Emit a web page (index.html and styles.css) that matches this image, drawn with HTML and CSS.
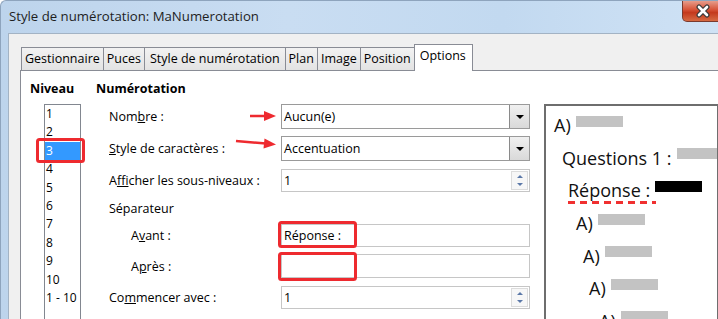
FILE: index.html
```html
<!DOCTYPE html>
<html lang="fr">
<head>
<meta charset="utf-8">
<link rel="stylesheet" href="styles.css">
</head>
<body>
<div class="window">
  <div class="titlebar">
    <span class="title">Style de numérotation: MaNumerotation</span>
    <div class="close">
      <svg width="20" height="14" viewBox="0 0 20 14"><path d="M6 3 L14 11 M14 3 L6 11" stroke="#3a3a3a" stroke-width="5" stroke-linecap="round"/><path d="M6 3 L14 11 M14 3 L6 11" stroke="#fff" stroke-width="2.6" stroke-linecap="round"/></svg>
    </div>
  </div>
  <div class="client">
    <div class="tabs">
      <div class="tab">Gestionnaire</div>
      <div class="tab">Puces</div>
      <div class="tab wide">Style de numérotation</div>
      <div class="tab">Plan</div>
      <div class="tab">Image</div>
      <div class="tab">Position</div>
      <div class="tab active">Options</div>
    </div>
    <div class="panel">
      <div class="col-level">
        <div class="hdr">Niveau</div>
        <div class="listbox">
          <div class="item">1</div>
          <div class="item">2</div>
          <div class="item sel">3</div>
          <div class="item">4</div>
          <div class="item">5</div>
          <div class="item">6</div>
          <div class="item">7</div>
          <div class="item">8</div>
          <div class="item">9</div>
          <div class="item">10</div>
          <div class="item">1 - 10</div>
        </div>
      </div>
      <div class="col-num">
        <div class="hdr">Numérotation</div>
        <div class="form">
          <div class="row r1"><span class="lbl">Nom<u>b</u>re :</span><div class="combo"><span class="val">Aucun(e)</span><span class="drop"><i></i></span></div></div>
          <div class="row r2"><span class="lbl"><u>S</u>tyle de caractères :</span><div class="combo"><span class="val">Accentuation</span><span class="drop"><i></i></span></div></div>
          <div class="row r3"><span class="lbl">A<u>f</u>ficher les sous-niveaux :</span><div class="field"><span class="val">1</span><span class="spin"><i class="up"></i><i class="dn"></i></span></div></div>
          <div class="row r4"><span class="lbl">Séparateur</span></div>
          <div class="row r5"><span class="lbl ind">A<u>v</u>ant :</span><div class="field"><span class="val">Réponse :</span></div></div>
          <div class="row r6"><span class="lbl ind">A<u>p</u>rès :</span><div class="field"><span class="val"></span></div></div>
          <div class="row r7"><span class="lbl">Co<u>m</u>mencer avec :</span><div class="field"><span class="val">1</span><span class="spin"><i class="up"></i><i class="dn"></i></span></div></div>
        </div>
      </div>
      <div class="preview">
        <div class="pl p1"><span>A)</span><b class="bar"></b></div>
        <div class="pl p2"><span>Questions 1 :</span><b class="bar"></b></div>
        <div class="pl p3"><span class="rep">Réponse :</span><b class="bar black"></b></div>
        <div class="pl p4"><span>A)</span><b class="bar"></b></div>
        <div class="pl p5"><span>A)</span><b class="bar"></b></div>
        <div class="pl p6"><span>A)</span><b class="bar"></b></div>
        <div class="pl p7"><span>A)</span><b class="bar"></b></div>
      </div>
    </div>
  </div>
  <svg class="annot" width="718" height="319" viewBox="0 0 718 319">
    <g fill="none" stroke="#ee2a2f" stroke-width="3">
      <rect x="37.5" y="139.5" width="46" height="22" rx="2"/>
      <rect x="279.5" y="222.5" width="76" height="24" rx="2"/>
      <rect x="279.5" y="253.5" width="76" height="26" rx="2"/>
    </g>
    <g stroke="#ee2a2f" stroke-width="2.5" fill="#ee2a2f">
      <line x1="250" y1="116" x2="266" y2="116"/>
      <polygon points="264,111 276,116 264,121" stroke="none"/>
      <line x1="236" y1="141" x2="266" y2="143.5"/>
      <polygon points="264.5,138.5 276,144.5 263.5,148.5" stroke="none"/>
    </g>
  </svg>
</div>
</body>
</html>
```

FILE: styles.css
```css
* { box-sizing: border-box; }
html, body { margin: 0; padding: 0; }
body { width: 718px; height: 319px; overflow: hidden; background: #fff; }

.window {
  position: relative;
  width: 718px;
  height: 319px;
  overflow: hidden;
  background: linear-gradient(to right, #bdd4ec 0%, #c9ddf2 40%, #c2d9f0 70%, #cfe2f5 100%);
  border-top: 1px solid #8ea4bd;
  border-left: 1px solid #8ea4bd;
  border-top-left-radius: 6px;
  font-family: "Open Sans", "Noto Sans", sans-serif;
  font-size: 12.5px;
  color: #000;
}

.titlebar {
  height: 32px;
  display: flex;
  align-items: flex-start;
}
.title {
  margin-left: 8px;
  margin-top: 6px;
  font-size: 13.2px;
  color: #1e1e1e;
}
.close {
  margin-left: auto;
  margin-right: -10px;
  margin-top: -1px;
  width: 46px;
  height: 22px;
  border: 1px solid #7a3a2e;
  border-top: none;
  border-bottom-left-radius: 5px;
  background: linear-gradient(to bottom, #e8a594 0%, #d8553a 45%, #c4391d 60%, #d66a43 100%);
  display: flex;
  align-items: center;
  justify-content: flex-start;
  padding-left: 10px;
}

.client {
  margin-left: 7px;
  height: 300px;
  background: #f0f0f0;
  border-top: 1px solid #a3b3c4;
  border-left: 1px solid #a3b3c4;
  padding-top: 9px;
}

.tabs {
  display: flex;
  align-items: flex-end;
  height: 27px;
  padding-left: 12px;
}
.tab {
  height: 23px;
  padding: 0 3px;
  line-height: 21px;
  border: 1px solid #898c95;
  border-bottom: none;
  margin-right: -1px;
  background: linear-gradient(to bottom, #f2f2f2, #e3e3e3);
  white-space: nowrap;
}
.tab.wide { padding: 0 5px; }
.tab.active {
  height: 27px;
  background: #fff;
  line-height: 22px;
  padding: 0 6px 0 5px;
  position: relative;
  z-index: 1;
  margin-bottom: -1px;
}

.panel {
  margin-left: 11px;
  width: 720px;
  height: 260px;
  background: #fff;
  border: 1px solid #898c95;
  display: flex;
  padding-top: 10px;
}

.hdr {
  font-weight: bold;
  height: 16px;
  line-height: 16px;
}

.col-level {
  width: 75px;
  padding-left: 9px;
}
.listbox {
  margin-top: 7px;
  margin-left: 14px;
  width: 37px;
  height: 240px;
  border: 1px solid #828790;
  font-size: 12px;
}
.item {
  height: 18.4px;
  line-height: 18.4px;
  padding-left: 1px;
  white-space: nowrap;
}
.item.sel {
  background: #3399ff;
  color: #fff;
}

.col-num {
  width: 448px;
}
.form {
  margin-top: 7px;
}
.row {
  display: flex;
  align-items: center;
}
.lbl {
  width: 185px;
  padding-left: 13px;
  white-space: nowrap;
}
.lbl.ind { padding-left: 35px; }
.r1 { height: 25px; }
.r2 { height: 25px; margin-top: 7px; }
.r3 { height: 23px; margin-top: 8px; }
.r4 { height: 16px; margin-top: 8px; }
.r5 { height: 23px; margin-top: 8px; }
.r6 { height: 24px; margin-top: 7px; }
.r7 { height: 23px; margin-top: 8px; }

.combo, .field {
  width: 249px;
  height: 100%;
  display: flex;
  align-items: center;
  background: #fff;
}
.combo { border: 1px solid #9a9a9a; }
.field { border: 1px solid #c6c6c6; }
.val {
  flex: 1;
  padding-left: 2px;
  white-space: nowrap;
}
.drop {
  width: 20px;
  height: 100%;
  border-left: 1px solid #8a8a8a;
  background: linear-gradient(to bottom, #f0f0f0, #d9d9d9);
  display: flex;
  align-items: center;
  justify-content: center;
}
.drop i {
  width: 0; height: 0;
  border-left: 4px solid transparent;
  border-right: 4px solid transparent;
  border-top: 4px solid #000;
}
.spin {
  width: 17px;
  height: 19px;
  margin-right: 1px;
  border: 1px solid #dcdcdc;
  display: flex;
  flex-direction: column;
  align-items: center;
  justify-content: space-around;
  background: #f7f7f7;
}
.spin i { width: 0; height: 0; border-left: 3px solid transparent; border-right: 3px solid transparent; }
.spin .up { border-bottom: 3px solid #5b78a8; }
.spin .dn { border-top: 3px solid #5b78a8; }

.preview {
  margin-top: 23px;
  width: 175px;
  height: 240px;
  border: 2px solid #6e6e6e;
  font-family: "Open Sans", "Noto Sans", sans-serif;
  font-size: 18px;
  color: #111;
  padding-top: 3px;
}
.pl {
  height: 32.6px;
  display: flex;
  align-items: center;
  white-space: nowrap;
}
.pl span { line-height: 20px; }
.bar {
  display: inline-block;
  width: 47px;
  height: 11px;
  background: #c3c3c3;
  margin-left: 5px;
  align-self: center;
  position: relative;
  top: -4px;
}
.bar.black { background: #000; }
.p1 { padding-left: 8px; }
.p2 { padding-left: 16px; }
.p3 { padding-left: 22px; }
.p4 { padding-left: 30px; }
.p5 { padding-left: 37px; }
.p6 { padding-left: 43px; }
.p7 { padding-left: 53px; }
.rep {
  position: relative;
}
.rep::after {
  content: "";
  position: absolute;
  left: 0;
  right: -6px;
  bottom: -4px;
  height: 3px;
  background: repeating-linear-gradient(to right, #f03030 0 7px, transparent 7px 12px);
}

.annot {
  position: absolute;
  left: -1px;
  top: -1px;
  pointer-events: none;
}
```
